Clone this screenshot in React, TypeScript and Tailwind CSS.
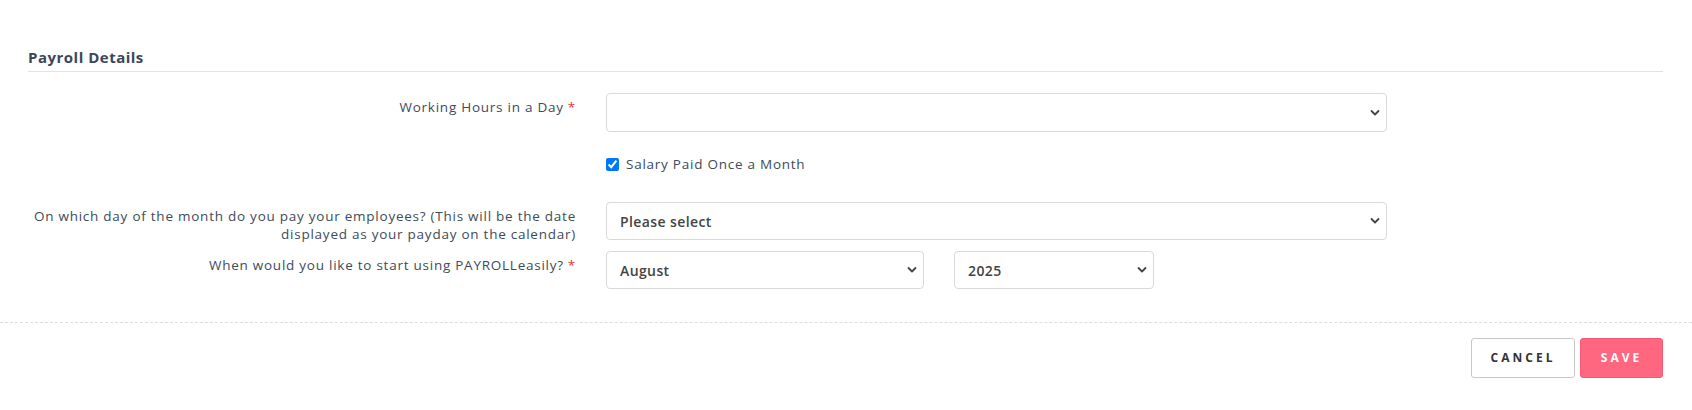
import React from "react";

function Chevron() {
  return (
    <svg width="10" height="7" viewBox="0 0 10 7" className="pointer-events-none absolute right-[6px] top-1/2 -translate-y-1/2">
      <path d="M1.5 1.5 L5 5 L8.5 1.5" fill="none" stroke="#444" strokeWidth="1.8" strokeLinecap="round" strokeLinejoin="round" />
    </svg>
  );
}

function Select({ value, className }: { value: string; className: string }) {
  return (
    <div className={"relative flex items-center rounded-[4px] border border-[#d9d9d9] bg-white " + className}>
      <span className="pl-[13px] text-[14px] font-semibold tracking-[0.4px] text-[#444]">{value}</span>
      <Chevron />
    </div>
  );
}

function Req() {
  return <span className="ml-[4px] text-[#e3342f]">*</span>;
}

export default function App() {
  return (
    <div
      className="w-[1692px] h-[410px] bg-white text-[#404b5a]"
      style={{ fontFamily: '"Open Sans", "Liberation Sans", sans-serif' }}
    >
      <div className="pl-[28px] pr-[29px]">
        <div className="pt-[47px] pb-[4px] border-b border-[#e2e2e2]">
          <h2 className="text-[15px] leading-[20px] font-bold tracking-[0.5px] text-[#3a475a]">Payroll Details</h2>
        </div>

        <div className="mt-[21px] flex gap-[30px]">
          <div className="w-[548px] pt-[5px] text-right text-[13.5px] leading-[18px] tracking-[0.75px]">
            Working Hours in a Day<Req />
          </div>
          <Select value="" className="w-[781px] h-[39px]" />
        </div>

        <div className="mt-[23px] flex gap-[30px] h-[18px]">
          <div className="w-[548px]" />
          <label className="flex items-center gap-[7px] text-[13.5px] leading-[18px] tracking-[0.75px]">
            <input type="checkbox" defaultChecked className="m-0 w-[13px] h-[13px]" />
            Salary Paid Once a Month
          </label>
        </div>

        <div className="mt-[29px] flex gap-[30px]">
          <div className="w-[548px] pt-[5px] text-right text-[13.5px] leading-[18px] tracking-[0.75px]">
            On which day of the month do you pay your employees? (This will be the date
            <br />
            displayed as your payday on the calendar)
          </div>
          <Select value="Please select" className="w-[781px] h-[38px]" />
        </div>

        <div className="mt-[8px] flex gap-[30px]">
          <div className="w-[548px] pt-[5px] text-right text-[13.5px] leading-[18px] tracking-[0.75px]">
            When would you like to start using PAYROLLeasily?<Req />
          </div>
          <div className="flex gap-[30px]">
            <Select value="August" className="w-[318px] h-[38px]" />
            <Select value="2025" className="w-[200px] h-[38px]" />
          </div>
        </div>
      </div>

      <div className="mt-[33px] border-t border-dashed border-[#dddddd]" />

      <div className="pt-[15px] pr-[29px] flex justify-end gap-[5px]">
        <button className="w-[104px] h-[40px] rounded-[3px] border border-[#c8c8c8] bg-white text-[12px] font-bold tracking-[3px] text-[#333]">
          CANCEL
        </button>
        <button className="w-[83px] h-[40px] rounded-[3px] border border-[#f55a75] bg-[#ff6680] text-[12px] font-bold tracking-[3px] text-white">
          SAVE
        </button>
      </div>
    </div>
  );
}
